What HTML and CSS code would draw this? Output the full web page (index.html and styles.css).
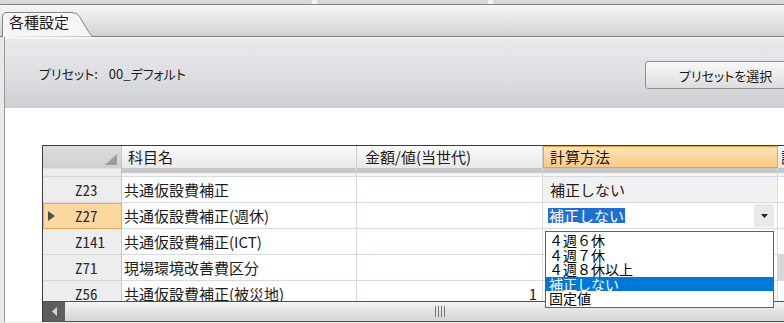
FILE: index.html
```html
<!DOCTYPE html>
<html lang="ja">
<head>
<meta charset="utf-8">
<title>各種設定</title>
<link rel="stylesheet" href="styles.css">
</head>
<body>
<div class="topstrip"><span class="seg s1"></span><span class="seg s2"></span><span class="seg s3"></span></div>
<div class="tabbar">
  <div class="tab">
    <svg class="tabshape" width="92" height="25" viewBox="0 0 92 25"><path d="M0.5 25 V5 Q0.5 0.5 5 0.5 H70 Q75 0.5 77.5 4.5 L87 20.5 Q89.5 24.5 92 24.5" fill="#f6f6f6" stroke="#858585"/></svg>
    <span class="tablabel">各種設定</span>
  </div>
</div>
<div class="content">
  <div class="preset">
    <div class="preset-label"><span>プリセット:</span><span class="preset-value">00_デフォルト</span></div>
    <button class="btn">プリセットを選択</button>
  </div>
  <div class="gridwrap">
    <div class="grid">
      <div class="viewport">
        <div class="row head">
          <div class="c rh corner"><svg width="12" height="11" viewBox="0 0 12 11"><polygon points="12,0 12,11 0,11" fill="#9c9c9c"/></svg></div>
          <div class="c hd name">科目名</div>
          <div class="c hd amt">金額/値(当世代)</div>
          <div class="c hd calc">計算方法</div>
          <div class="c hd more">計</div>
        </div>
        <div class="row band">
          <div class="c rh"></div><div class="c"></div><div class="c"></div><div class="c"></div><div class="c"></div>
        </div>
        <div class="row">
          <div class="c rh"><span class="ind"></span><span class="code">Z23</span></div>
          <div class="c name">共通仮設費補正</div>
          <div class="c amt"></div>
          <div class="c calc ro">補正しない</div>
          <div class="c more">‐</div>
        </div>
        <div class="row">
          <div class="c rh cur"><span class="ind"><svg width="7" height="10" viewBox="0 0 7 10"><polygon points="0,0 7,5 0,10" fill="#4e4e4e"/></svg></span><span class="code">Z27</span></div>
          <div class="c name">共通仮設費補正(週休)</div>
          <div class="c amt"></div>
          <div class="c calc edit"><span class="hl">補正しない</span><span class="ddbtn"><svg width="7" height="4" viewBox="0 0 7 4"><polygon points="0,0 7,0 3.5,4" fill="#222"/></svg></span></div>
          <div class="c more">‐</div>
        </div>
        <div class="row">
          <div class="c rh"><span class="ind"></span><span class="code">Z141</span></div>
          <div class="c name">共通仮設費補正(ICT)</div>
          <div class="c amt"></div>
          <div class="c calc"></div>
          <div class="c more">‐</div>
        </div>
        <div class="row">
          <div class="c rh"><span class="ind"></span><span class="code">Z71</span></div>
          <div class="c name">現場環境改善費区分</div>
          <div class="c amt"></div>
          <div class="c calc"></div>
          <div class="c more gray"></div>
        </div>
        <div class="row">
          <div class="c rh"><span class="ind"></span><span class="code">Z56</span></div>
          <div class="c name">共通仮設費補正(被災地)</div>
          <div class="c amt num">1</div>
          <div class="c calc"></div>
          <div class="c more">‐</div>
        </div>
      </div>
      <div class="hscroll">
        <div class="sbtn"><svg width="5" height="9" viewBox="0 0 5 9"><polygon points="5,0 5,9 0,4.5" fill="#d4d4d4"/></svg></div>
        <div class="thumb"><span class="grip"></span><span class="grip"></span><span class="grip"></span><span class="grip"></span></div>
      </div>
      <ul class="dropdown">
        <li>４週６休</li>
        <li>４週７休</li>
        <li>４週８休以上</li>
        <li class="on">補正しない</li>
        <li>固定値</li>
      </ul>
    </div>
  </div>
</div>
</body>
</html>
```

FILE: styles.css
```css
* { box-sizing: border-box; }
html, body { margin: 0; padding: 0; }
body {
  width: 784px;
  height: 323px;
  overflow: hidden;
  background: #e9e9e9;
  font-family: "Noto Sans CJK JP", sans-serif;
  color: #1b1b1b;
}

.topstrip { height: 4px; display: flex; gap: 5px; background: #f3f3f3; }
.seg { height: 4px; background: #d8d8d8; border-radius: 0 0 2px 2px; }
.s1 { width: 312px; }
.s2 { width: 171px; }
.s3 { flex: 1; }

.tabbar {
  height: 33px;
  border-top: 1px solid #7d7d7d;
  border-bottom: 1px solid #7d7d7d;
  background: linear-gradient(#f7f7f7, #d2d2d2);
  display: flex;
  align-items: flex-end;
  padding-left: 2px;
}
.tab { position: relative; width: 92px; height: 25px; margin-bottom: -1px; }
.tabshape { position: absolute; left: 0; top: 0; }
.tablabel { position: relative; display: block; padding: 1px 0 0 7px; font-size: 15px; line-height: 18px; }

.content {
  margin-left: 4px;
  border-left: 1px solid #9b9b9b;
  width: 900px;
  background: #fff;
}
.preset {
  height: 71px;
  border-top: 2px solid #f6f6f7;
  background: linear-gradient(#e9eaec, #dcdde0 60%, #cbcdd0);
  display: grid;
  grid-template-columns: 606px 160px;
  align-items: center;
  padding-left: 34px;
}
.preset-label { display: flex; font-size: 13px; font-feature-settings: "palt"; }
.preset-value { margin-left: 11px; }
.btn {
  height: 28px;
  margin-top: 3px;
  border: 1px solid #8e8e8e;
  border-radius: 3px;
  background: linear-gradient(#f8f8f8, #ebebeb 50%, #dcdcdc);
  font: 13px "Noto Sans CJK JP", sans-serif;
  font-feature-settings: "palt";
  color: #1b1b1b;
  text-align: left;
  padding: 0 0 0 33px;
}

.gridwrap { padding: 37px 0 0 37px; background: #fff; }
.grid {
  position: relative;
  width: 836px;
  border-top: 1px solid #3c3c3c;
  border-left: 1px solid #3c3c3c;
}
.viewport { height: 155px; overflow: hidden; }
.row {
  display: grid;
  grid-template-columns: 79px 235px 186px 235px 100px;
  height: 26px;
}
.c {
  border-right: 1px solid #d5dbe6;
  border-bottom: 1px solid #d5dbe6;
  background: #fff;
  font-size: 15px;
  line-height: 25px;
  white-space: nowrap;
  overflow: hidden;
}
.name { padding-left: 2px; }
.calc { padding-left: 7px; }
.more { padding-left: 3px; }
.num { text-align: right; padding-right: 5px; }

.rh {
  background: #ededed;
  border-right: 1px solid #c6c6c6;
  border-bottom: 1px solid #d6d6d6;
  display: grid;
  grid-template-columns: 27px auto;
  align-items: center;
  padding-left: 5px;
}
.ind { display: flex; align-items: center; height: 25px; }
.code {
  font-family: "Noto Sans Mono CJK JP", "Noto Sans CJK JP", sans-serif;
  font-feature-settings: "hwid";
  font-size: 15px;
  color: #2a2a2a;
}
.rh.cur {
  background: #fdd7a0;
  border-right-color: #f1a84f;
  border-bottom-color: #f1a84f;
  box-shadow: inset 1px 1px 0 #f1a84f;
}

.row.head { height: 22px; }
.hd {
  background: linear-gradient(#fafafa, #e8e8e8);
  border-right: 1px solid #d0d0d0;
  border-bottom: none;
  line-height: 22px;
}
.hd.name { padding-left: 6px; }
.hd.amt { padding-left: 8px; }
.hd.calc {
  padding-left: 6px;
  background: linear-gradient(#fde4b7, #f9ca84);
  border: 1px solid #f0a040;
  line-height: 20px;
}
.corner {
  background: linear-gradient(#dcdcdc, #d0d0d0);
  border-bottom: none;
  display: flex;
  justify-content: flex-end;
  align-items: flex-start;
  padding: 8px 4px 0 0;
}

.row.band { height: 9px; }
.band .c { background: linear-gradient(#c7c7c7 0 5px, #f4f4f4 5px); }
.band .rh { background: linear-gradient(#e2e2e2 0 1px, #ececec 1px); }

.ro { background: #f1f1f1; }
.edit { display: flex; align-items: center; padding-left: 5px; padding-right: 3px; }
.hl { background: #1f6fd1; color: #fff; line-height: 15px; padding: 0 1px; }
.ddbtn {
  margin-left: auto;
  width: 20px;
  height: 23px;
  background: #e9e9e9;
  display: flex;
  align-items: center;
  justify-content: center;
}
.gray { background: #d6d6d6; }

.hscroll {
  height: 21px;
  border-top: 1px solid #505050;
  border-bottom: 1px solid #505050;
  display: flex;
  background: #d8d8d8;
}
.sbtn {
  width: 22px;
  background: #5e5e5e;
  display: flex;
  align-items: center;
  justify-content: center;
}
.thumb {
  width: 750px;
  background: linear-gradient(#f6f6f6, #e2e2e2 50%, #d3d3d3);
  border-radius: 2px 0 0 2px;
  display: flex;
  align-items: center;
  justify-content: center;
  gap: 2px;
}
.grip { width: 1px; height: 11px; background: #777; }

.dropdown {
  position: absolute;
  left: 502px;
  top: 85px;
  width: 229px;
  height: 77px;
  margin: 0;
  padding: 1px 0 0;
  list-style: none;
  background: #fff;
  border: 1px solid #0a78d6;
}
.dropdown li {
  height: 14.6px;
  line-height: 14.6px;
  font-size: 14px;
  padding-left: 3px;
  color: #000;
  white-space: nowrap;
}
.dropdown li.on { background: #0078d7; color: #fff; }
```
